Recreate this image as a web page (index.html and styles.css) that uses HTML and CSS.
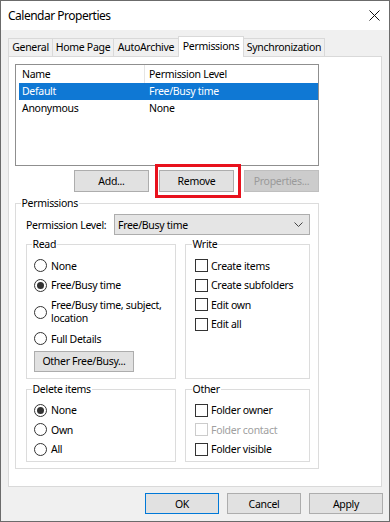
FILE: index.html
```html
<!DOCTYPE html>
<html lang="en">
<head>
  <meta charset="UTF-8" />
  <title>Calendar Properties</title>
  <link rel="stylesheet" href="styles.css">
</head>
<body>

  <div class="window">
    <div class="titlebar">
      <span class="title">Calendar Properties</span>
      <svg class="close" width="11" height="11" viewBox="0 0 11 11"><path d="M0.5 0.5L10.5 10.5M10.5 0.5L0.5 10.5" stroke="#111" stroke-width="1"/></svg>
    </div>

    <div class="tabs">
      <div class="tab tab-general">General</div>
      <div class="tab tab-home">Home Page</div>
      <div class="tab tab-archive">AutoArchive</div>
      <div class="tab tab-perms active">Permissions</div>
      <div class="tab tab-sync">Synchronization</div>
    </div>

    <div class="panel">
      <div class="list">
        <div class="row head"><span class="col-name">Name</span><span class="col-level">Permission Level</span></div>
        <div class="row selected"><span class="col-name">Default</span><span class="col-level">Free/Busy time</span></div>
        <div class="row"><span class="col-name">Anonymous</span><span class="col-level">None</span></div>
      </div>

      <div class="list-buttons">
        <button class="btn">Add...</button>
        <button class="btn marked">Remove</button>
        <button class="btn" disabled>Properties...</button>
      </div>

      <fieldset class="group perms">
        <legend>Permissions</legend>
        <div class="level-row">
          <span class="level-label">Permission Level:</span>
          <div class="combo">
            <span>Free/Busy time</span>
            <svg width="9" height="5" viewBox="0 0 9 5"><path d="M0.5 0.5L4.5 4.5L8.5 0.5" fill="none" stroke="#444" stroke-width="1"/></svg>
          </div>
        </div>

        <div class="group-row">
          <fieldset class="group">
            <legend>Read</legend>
            <div class="option"><span class="radio"></span>None</div>
            <div class="option"><span class="radio checked"></span>Free/Busy time</div>
            <div class="option tall"><span class="radio"></span><span>Free/Busy time, subject,<br>location</span></div>
            <div class="option"><span class="radio"></span>Full Details</div>
            <button class="btn other-btn">Other Free/Busy...</button>
          </fieldset>
          <fieldset class="group checks">
            <legend>Write</legend>
            <div class="option"><span class="check"></span>Create items</div>
            <div class="option"><span class="check"></span>Create subfolders</div>
            <div class="option"><span class="check"></span>Edit own</div>
            <div class="option"><span class="check"></span>Edit all</div>
          </fieldset>
        </div>

        <div class="group-row second">
          <fieldset class="group short">
            <legend>Delete items</legend>
            <div class="option"><span class="radio checked"></span>None</div>
            <div class="option"><span class="radio"></span>Own</div>
            <div class="option"><span class="radio"></span>All</div>
          </fieldset>
          <fieldset class="group checks short">
            <legend>Other</legend>
            <div class="option"><span class="check"></span>Folder owner</div>
            <div class="option disabled"><span class="check"></span>Folder contact</div>
            <div class="option"><span class="check"></span>Folder visible</div>
          </fieldset>
        </div>
      </fieldset>
    </div>

    <div class="dialog-buttons">
      <button class="btn default">OK</button>
      <button class="btn">Cancel</button>
      <button class="btn">Apply</button>
    </div>
  </div>

</body>
</html>
```

FILE: styles.css
```css
* {
  margin: 0;
  padding: 0;
  box-sizing: border-box;
}

body {
  font-family: "Noto Sans", "Open Sans", sans-serif;
  font-size: 10.5px;
  letter-spacing: -0.3px;
  color: #000;
  background: #fff;
}

.window {
  width: 390px;
  height: 522px;
  border: 1px solid #6b6b6b;
  background: #f0f0f0;
  display: flex;
  flex-direction: column;
}

/* title bar */
.titlebar {
  height: 29px;
  background: #fff;
  display: flex;
  align-items: center;
  justify-content: space-between;
  padding: 0 9px 0 7px;
}

.title {
  font-size: 12px;
  letter-spacing: -0.5px;
}

/* tabs */
.tabs {
  display: flex;
  align-items: flex-end;
  height: 20px;
  margin: 6px 0 0 7px;
  position: relative;
  z-index: 1;
}

.tab {
  height: 18px;
  line-height: 17px;
  text-align: center;
  white-space: nowrap;
  border: 1px solid #d9d9d9;
  border-bottom: none;
  border-right: none;
  background: #f0f0f0;
}

.tab-general { width: 44px; }
.tab-home { width: 61px; }
.tab-archive { width: 65px; }
.tab-perms { width: 66px; }
.tab-sync { width: 81px; border-right: 1px solid #d9d9d9; }

.tab.active {
  height: 21px;
  line-height: 18px;
  margin-bottom: -1px;
  background: #fff;
  border-right: 1px solid #d9d9d9;
}

.tab.active + .tab {
  border-left: none;
}

/* white page */
.panel {
  height: 431px;
  margin: 0 7px;
  background: #fff;
  border: 1px solid #d9d9d9;
  padding: 7px 0 0 6px;
}

.list {
  width: 304px;
  height: 102px;
  border: 1px solid #8f8f8f;
  padding-left: 3px;
}

.row {
  display: flex;
  height: 17px;
  line-height: 17px;
}

.row.head {
  height: 18px;
  line-height: 18px;
}

.col-name {
  width: 126px;
  padding-left: 3px;
  border-right: 1px solid transparent;
}

.head .col-name {
  border-right-color: #e5e5e5;
}

.col-level {
  padding-left: 4px;
}

.row.selected {
  background: #0f78d4;
  color: #fff;
}

.list-buttons {
  display: flex;
  justify-content: flex-end;
  gap: 10px;
  width: 304px;
  margin-top: 4px;
}

.btn {
  font: inherit;
  letter-spacing: inherit;
  color: #000;
  width: 75px;
  height: 22px;
  background: #e1e1e1;
  border: 1px solid #adadad;
}

.btn:disabled {
  background: #cccccc;
  border-color: #bfbfbf;
  color: #9a9a9a;
}

.btn.marked {
  position: relative;
}

.btn.marked::after {
  content: "";
  position: absolute;
  left: -5px;
  top: -7px;
  right: -8px;
  bottom: -7px;
  border: 3px solid #e8111d;
}

/* group boxes */
.group {
  border: 1px solid #dcdcdc;
  min-width: 0;
}

.group legend {
  margin-left: -2.5px;
  padding: 0 1px;
  line-height: 13px;
}

.perms {
  width: 304px;
  margin-top: 5px;
  padding: 0 8px 6px 10px;
}

.perms > legend {
  margin-left: -5.5px;
}

.level-row {
  display: flex;
  align-items: center;
  justify-content: space-between;
  margin-top: 4px;
}

.combo {
  width: 196px;
  height: 21px;
  background: #e5e5e5;
  border: 1px solid #adadad;
  display: flex;
  align-items: center;
  justify-content: space-between;
  padding: 0 6px 0 3px;
}

.group-row {
  display: grid;
  grid-template-columns: 150px 125px;
  gap: 9px;
  margin-top: 3px;
}

.group-row.second {
  margin-top: 4px;
}

.group-row .group {
  padding: 5px 6px 6px 7px;
}

.group-row .checks {
  padding-left: 9px;
}

.group-row .checks legend {
  margin-left: -3.5px;
}

.group-row .short {
  padding-bottom: 2px;
}

.option {
  display: flex;
  align-items: center;
  height: 19.5px;
}

.option.tall {
  height: 34px;
  line-height: 13px;
}

.radio {
  width: 13px;
  height: 13px;
  border: 1px solid #333;
  border-radius: 50%;
  margin-right: 4px;
  flex-shrink: 0;
  display: flex;
  align-items: center;
  justify-content: center;
}

.radio.checked::after {
  content: "";
  width: 7px;
  height: 7px;
  border-radius: 50%;
  background: #333;
}

.check {
  width: 13px;
  height: 13px;
  border: 1px solid #333;
  background: #fff;
  margin-right: 3px;
}

.option.disabled {
  color: #a0a0a0;
}

.option.disabled .check {
  border-color: #cccccc;
}

.other-btn {
  width: 100px;
  height: 21px;
  margin-top: 2px;
}

/* bottom buttons */
.dialog-buttons {
  display: flex;
  justify-content: flex-end;
  gap: 8px;
  margin: 6px 6px 0 0;
}

.dialog-buttons .btn {
  width: 74px;
  height: 21px;
}

.btn.default {
  border-color: #0078d7;
}
```
